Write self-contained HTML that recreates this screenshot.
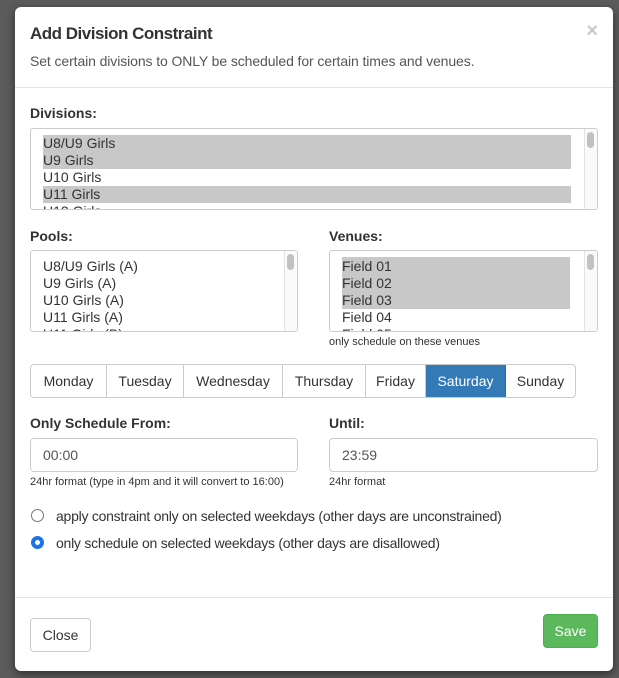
<!DOCTYPE html>
<html><head><meta charset="utf-8"><style>
*{box-sizing:border-box;margin:0;padding:0}
body{width:619px;height:678px;background:#5b5b5b;font-family:"Liberation Sans",sans-serif;color:#333;position:relative;overflow:hidden}
.modal{position:absolute;left:15px;top:7px;width:598px;height:664px;background:#fff;border-radius:6px;box-shadow:0 3px 9px rgba(0,0,0,.5)}
.a{position:absolute}
h1{position:absolute;left:15px;top:17px;font-size:17px;font-weight:bold;color:#333;letter-spacing:-0.5px}
.x{position:absolute;right:15px;top:13px;font-size:20px;color:#c8c8c8;font-weight:bold}
.sub{left:15px;top:46px;font-size:14px;color:#555;letter-spacing:-0.1px}
.hr{left:0;width:598px;height:1px;background:#e5e5e5}
.lbl{font-size:14px;font-weight:bold;color:#333}
.sel{border:1px solid #ccc;border-radius:3px;overflow:hidden;background:#fff}
.opt{position:absolute;left:12px;height:17px;line-height:17px;font-size:14px;color:#333;padding-left:0}
.hl{background:#c8c8c8}
.track{position:absolute;right:0;top:0;bottom:0;width:13px;border-left:1px solid #e3e3e3;background:#fafafa}
.thumb{position:absolute;right:3px;top:3px;width:7px;height:16px;border-radius:4px;background:#c1c1c1}
.days{left:15px;top:357px;height:34px;display:flex;border:1px solid #ccc;border-radius:4px;overflow:hidden}
.days div{height:32px;line-height:32px;font-size:14px;text-align:center;border-right:1px solid #ccc;color:#333}
.days div:last-child{border-right:none}
.inp{border:1px solid #ccc;border-radius:4px;height:34px;line-height:32px;padding-left:12px;font-size:14px;color:#555}
.help{font-size:11px;color:#333}
.radio{width:13px;height:13px;border-radius:50%;border:1px solid #777}
.rtxt{font-size:14px;color:#333;letter-spacing:-0.25px}
</style></head><body>
<div class="modal">
<h1>Add Division Constraint</h1>
<div class="x">×</div>
<div class="a sub">Set certain divisions to ONLY be scheduled for certain times and venues.</div>
<div class="a hr" style="top:80px"></div>
<div class="a lbl" style="left:15px;top:98px">Divisions:</div>
<div class="a sel" style="left:15px;top:121px;width:568px;height:82px">
<div class="opt hl" style="top:6px;width:528px">U8/U9 Girls</div>
<div class="opt hl" style="top:23px;width:528px">U9 Girls</div>
<div class="opt" style="top:40px">U10 Girls</div>
<div class="opt hl" style="top:57px;width:528px">U11 Girls</div>
<div class="opt" style="top:74px">U12 Girls</div>
<div class="track"><div class="thumb"></div></div>
</div>
<div class="a lbl" style="left:15px;top:221px">Pools:</div>
<div class="a sel" style="left:15px;top:243px;width:268px;height:82px">
<div class="opt" style="top:7px">U8/U9 Girls (A)</div>
<div class="opt" style="top:24px">U9 Girls (A)</div>
<div class="opt" style="top:41px">U10 Girls (A)</div>
<div class="opt" style="top:58px">U11 Girls (A)</div>
<div class="opt" style="top:75px">U11 Girls (B)</div>
<div class="track"><div class="thumb"></div></div>
</div>
<div class="a lbl" style="left:314px;top:221px">Venues:</div>
<div class="a sel" style="left:314px;top:243px;width:269px;height:82px">
<div class="opt hl" style="top:6px;width:228px;padding-top:1px;height:18px;line-height:17px">Field 01</div>
<div class="opt hl" style="top:24px;width:228px">Field 02</div>
<div class="opt hl" style="top:41px;width:228px">Field 03</div>
<div class="opt" style="top:58px">Field 04</div>
<div class="opt" style="top:75px">Field 05</div>
<div class="track"><div class="thumb"></div></div>
</div>
<div class="a help" style="left:314px;top:329px">only schedule on these venues</div>
<div class="a days">
<div style="width:76px">Monday</div>
<div style="width:77px">Tuesday</div>
<div style="width:99px">Wednesday</div>
<div style="width:83px">Thursday</div>
<div style="width:60px">Friday</div>
<div style="width:80px;background:#337ab7;color:#fff;border-right-color:#2e6da4">Saturday</div>
<div style="width:69px">Sunday</div>
</div>
<div class="a lbl" style="left:15px;top:408px">Only Schedule From:</div>
<div class="a lbl" style="left:314px;top:408px">Until:</div>
<div class="a inp" style="left:15px;top:431px;width:268px">00:00</div>
<div class="a inp" style="left:314px;top:431px;width:269px">23:59</div>
<div class="a help" style="left:15px;top:469px">24hr format (type in 4pm and it will convert to 16:00)</div>
<div class="a help" style="left:314px;top:469px">24hr format</div>
<div class="a radio" style="left:16px;top:502px"></div>
<div class="a rtxt" style="left:41px;top:501px">apply constraint only on selected weekdays (other days are unconstrained)</div>
<div class="a radio" style="left:16px;top:529px;border:4px solid #1a73e8;width:13px;height:13px"></div>
<div class="a rtxt" style="left:41px;top:528px">only schedule on selected weekdays (other days are disallowed)</div>
<div class="a hr" style="top:590px"></div>
<div class="a" style="left:15px;top:611px;width:61px;height:34px;border:1px solid #ccc;border-radius:4px;font-size:14px;line-height:32px;text-align:center">Close</div>
<div class="a" style="left:528px;top:607px;width:55px;height:34px;border:1px solid #4cae4c;background:#5cb85c;border-radius:4px;font-size:14px;line-height:32px;text-align:center;color:#fff">Save</div>
</div>
</body></html>
